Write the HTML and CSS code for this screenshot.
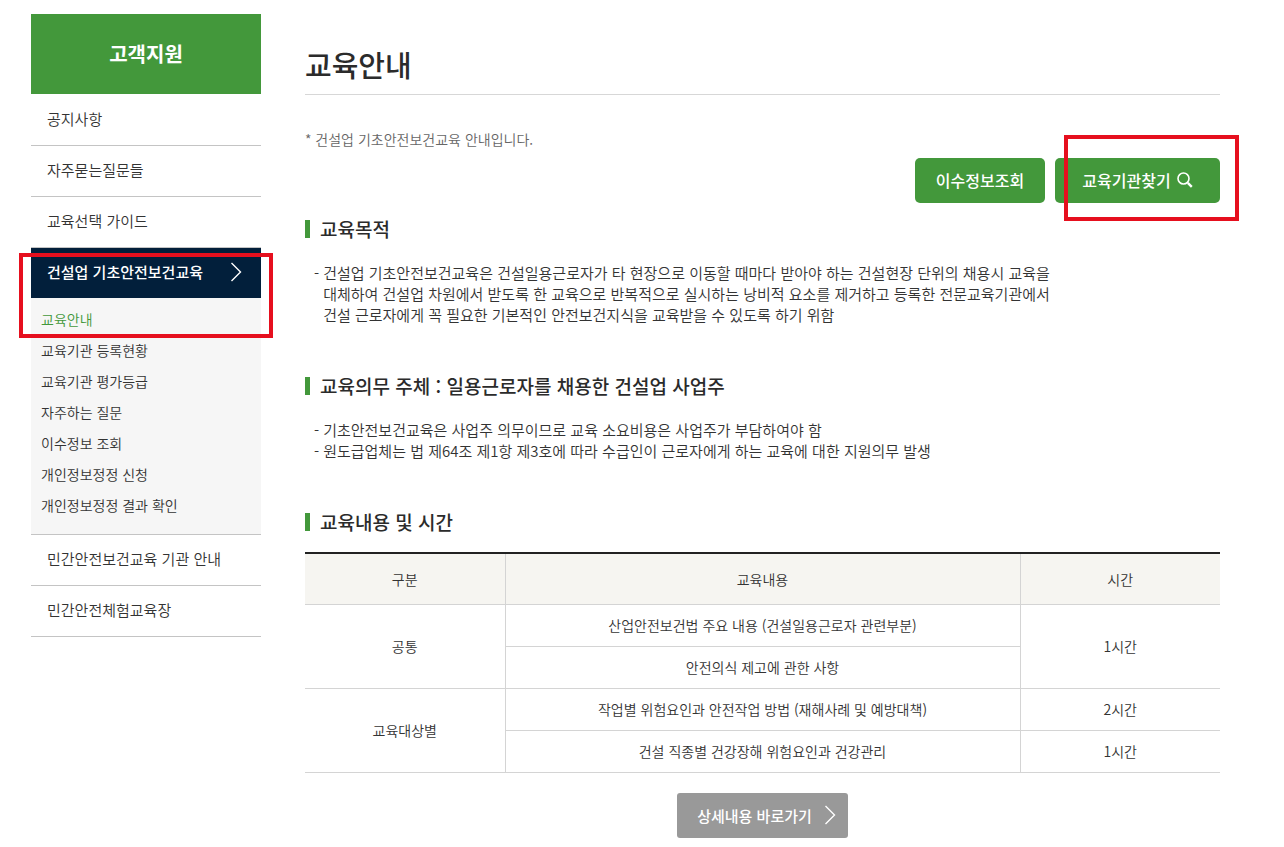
FILE: index.html
```html
<!DOCTYPE html>
<html lang="ko">
<head>
<meta charset="utf-8">
<meta name="viewport" content="width=device-width, initial-scale=1">
<title>교육안내</title>
<link rel="stylesheet" href="styles.css">
</head>
<body>
<div class="page">
  <aside class="side">
    <h2 class="side-title">고객지원</h2>
    <nav>
      <ul class="menu">
        <li class="menu-item"><a class="menu-link" href="#">공지사항</a></li>
        <li class="menu-item"><a class="menu-link" href="#">자주묻는질문들</a></li>
        <li class="menu-item"><a class="menu-link" href="#">교육선택 가이드</a></li>
        <li class="menu-item menu-item-open">
          <a class="menu-link menu-link-active" href="#">건설업 기초안전보건교육
            <svg class="chevron" viewBox="0 0 12 20" aria-hidden="true"><path d="M1.5 1 10.5 10 1.5 19"/></svg>
          </a>
          <ul class="submenu">
            <li><a class="submenu-link submenu-link-current" href="#">교육안내</a></li>
            <li><a class="submenu-link" href="#">교육기관 등록현황</a></li>
            <li><a class="submenu-link" href="#">교육기관 평가등급</a></li>
            <li><a class="submenu-link" href="#">자주하는 질문</a></li>
            <li><a class="submenu-link" href="#">이수정보 조회</a></li>
            <li><a class="submenu-link" href="#">개인정보정정 신청</a></li>
            <li><a class="submenu-link" href="#">개인정보정정 결과 확인</a></li>
          </ul>
          <span class="marker marker-menu"></span>
        </li>
        <li class="menu-item"><a class="menu-link" href="#">민간안전보건교육 기관 안내</a></li>
        <li class="menu-item"><a class="menu-link" href="#">민간안전체험교육장</a></li>
      </ul>
    </nav>
  </aside>

  <main class="content">
    <h1 class="title">교육안내</h1>
    <p class="note">* 건설업 기초안전보건교육 안내입니다.</p>
    <div class="actions">
      <button class="btn" type="button">이수정보조회</button>
      <div class="marked">
        <button class="btn btn-search" type="button">교육기관찾기
          <svg class="search" viewBox="0 0 16 16" aria-hidden="true"><circle cx="6.5" cy="6.5" r="5.5"/><path class="handle" d="M10.8 10.8 14.8 14.8"/></svg>
        </button>
        <span class="marker marker-search"></span>
      </div>
    </div>

    <section class="section">
      <h2 class="heading">교육목적</h2>
      <ul class="lines">
        <li>건설업 기초안전보건교육은 건설일용근로자가 타 현장으로 이동할 때마다 받아야 하는 건설현장 단위의 채용시 교육을<br>대체하여 건설업 차원에서 받도록 한 교육으로 반복적으로 실시하는 낭비적 요소를 제거하고 등록한 전문교육기관에서<br>건설 근로자에게 꼭 필요한 기본적인 안전보건지식을 교육받을 수 있도록 하기 위함</li>
      </ul>
    </section>

    <section class="section">
      <h2 class="heading">교육의무 주체 : 일용근로자를 채용한 건설업 사업주</h2>
      <ul class="lines">
        <li>기초안전보건교육은 사업주 의무이므로 교육 소요비용은 사업주가 부담하여야 함</li>
        <li>원도급업체는 법 제64조 제1항 제3호에 따라 수급인이 근로자에게 하는 교육에 대한 지원의무 발생</li>
      </ul>
    </section>

    <section>
      <h2 class="heading">교육내용 및 시간</h2>
      <table class="table">
        <colgroup><col class="col-side"><col><col class="col-side"></colgroup>
        <thead>
          <tr><th scope="col">구분</th><th scope="col">교육내용</th><th scope="col">시간</th></tr>
        </thead>
        <tbody>
          <tr><td rowspan="2">공통</td><td>산업안전보건법 주요 내용 (건설일용근로자 관련부분)</td><td rowspan="2">1시간</td></tr>
          <tr><td class="inner">안전의식 제고에 관한 사항</td></tr>
          <tr><td rowspan="2">교육대상별</td><td>작업별 위험요인과 안전작업 방법 (재해사례 및 예방대책)</td><td>2시간</td></tr>
          <tr><td class="inner">건설 직종별 건강장해 위험요인과 건강관리</td><td>1시간</td></tr>
        </tbody>
      </table>
    </section>

    <div class="more">
      <a class="btn btn-more" href="#">상세내용 바로가기
        <svg class="chevron" viewBox="0 0 12 20" aria-hidden="true"><path d="M1.5 1 10.5 10 1.5 19"/></svg>
      </a>
    </div>
  </main>
</div>
</body>
</html>
```
FILE: styles.css
```css
* {
  box-sizing: border-box;
}

body {
  margin: 0;
  background: #fff;
  color: #333;
  font-family: "Noto Sans CJK KR", "Noto Sans", sans-serif;
  font-size: 15px;
  font-weight: 350;
}

h1, h2, p, ul {
  margin: 0;
  padding: 0;
}

ul {
  list-style: none;
}

a {
  color: inherit;
  text-decoration: none;
}

.page {
  display: flex;
  align-items: flex-start;
  gap: 44px;
  padding: 14px 64px 8px 31px;
}

/* Side navigation */
.side {
  flex: 0 0 230px;
}

.side-title {
  background: #43983b;
  color: #fff;
  font-size: 20px;
  font-weight: 700;
  line-height: 80px;
  text-align: center;
}

.menu {
  padding-top: 1px;
}

.menu-item {
  border-bottom: 1px solid #c4c4c4;
}

.menu-item-open {
  position: relative;
}

.menu-link {
  display: flex;
  align-items: center;
  justify-content: space-between;
  padding: 0 19px 2px 16px;
  line-height: 48px;
}

.menu-link-active {
  background: #021f3b;
  color: #fff;
  font-weight: 500;
}

.chevron {
  width: 12px;
  height: 20px;
  fill: none;
  stroke: #fff;
  stroke-width: 1.4;
}

.submenu {
  padding: 6px 10px 13px;
  background: #f6f6f6;
}

.submenu-link {
  display: block;
  font-size: 14px;
  line-height: 31px;
}

.submenu-link-current {
  color: #43983b;
}

/* Highlight frames laid over the controls */
.marker {
  position: absolute;
  border: 4px solid #e60f1e;
  pointer-events: none;
}

.marker-menu {
  top: 5px;
  left: -12px;
  right: -12px;
  height: 85px;
}

.marker-search {
  top: -23px;
  right: -19px;
  bottom: -18px;
  left: 9px;
}

/* Content */
.content {
  flex: 1;
  min-width: 0;
}

.title {
  padding: 26px 0 6px;
  border-bottom: 1px solid #d7d7d7;
  color: #2b2b2b;
  font-size: 29px;
  font-weight: 500;
  line-height: 48px;
}

.note {
  padding-top: 34px;
  color: #666;
  font-size: 14px;
  line-height: 20px;
}

.actions {
  display: flex;
  justify-content: flex-end;
  gap: 10px;
  padding: 9px 0 12px;
}

.marked {
  position: relative;
}

.btn {
  display: flex;
  align-items: center;
  justify-content: center;
  gap: 6px;
  min-width: 130px;
  height: 45px;
  padding: 0 20px 2px;
  border: 0;
  border-radius: 5px;
  background: #43983b;
  color: #fff;
  font-family: inherit;
  font-size: 16px;
  font-weight: 500;
}

.btn-search {
  min-width: 165px;
}

.search {
  width: 16px;
  height: 16px;
  fill: none;
  stroke: #fff;
  stroke-width: 1.6;
}

.handle {
  stroke-width: 2.4;
}

.section {
  padding-bottom: 47px;
}

.heading {
  display: flex;
  align-items: center;
  gap: 10px;
  color: #2b2b2b;
  font-size: 19px;
  font-weight: 500;
  line-height: 28px;
}

.heading::before {
  content: "";
  width: 5px;
  height: 18px;
  background: #43983b;
}

.lines {
  padding: 19px 0 0 9px;
  line-height: 21px;
}

.lines li {
  display: flex;
  gap: 4px;
}

.lines li::before {
  content: "-";
}

.table {
  width: 100%;
  margin-top: 16px;
  border-collapse: collapse;
  border-top: 2px solid #222;
  table-layout: fixed;
  text-align: center;
}

.col-side {
  width: 200px;
}

.table th,
.table td {
  height: 42px;
  padding: 0 10px;
  border-bottom: 1px solid #d4d4d4;
  border-left: 1px solid #d4d4d4;
  color: #333;
  font-size: 14px;
  font-weight: 350;
  line-height: 20px;
}

.table th {
  height: 51px;
  background: #f6f5f1;
}

.table tr > :first-child:not(.inner) {
  border-left: 0;
}

.more {
  display: flex;
  justify-content: center;
  padding-top: 20px;
}

.btn-more {
  gap: 12px;
  padding: 0 12px 0 20px;
  border-radius: 3px;
  background: #999;
  font-size: 15px;
}
```
